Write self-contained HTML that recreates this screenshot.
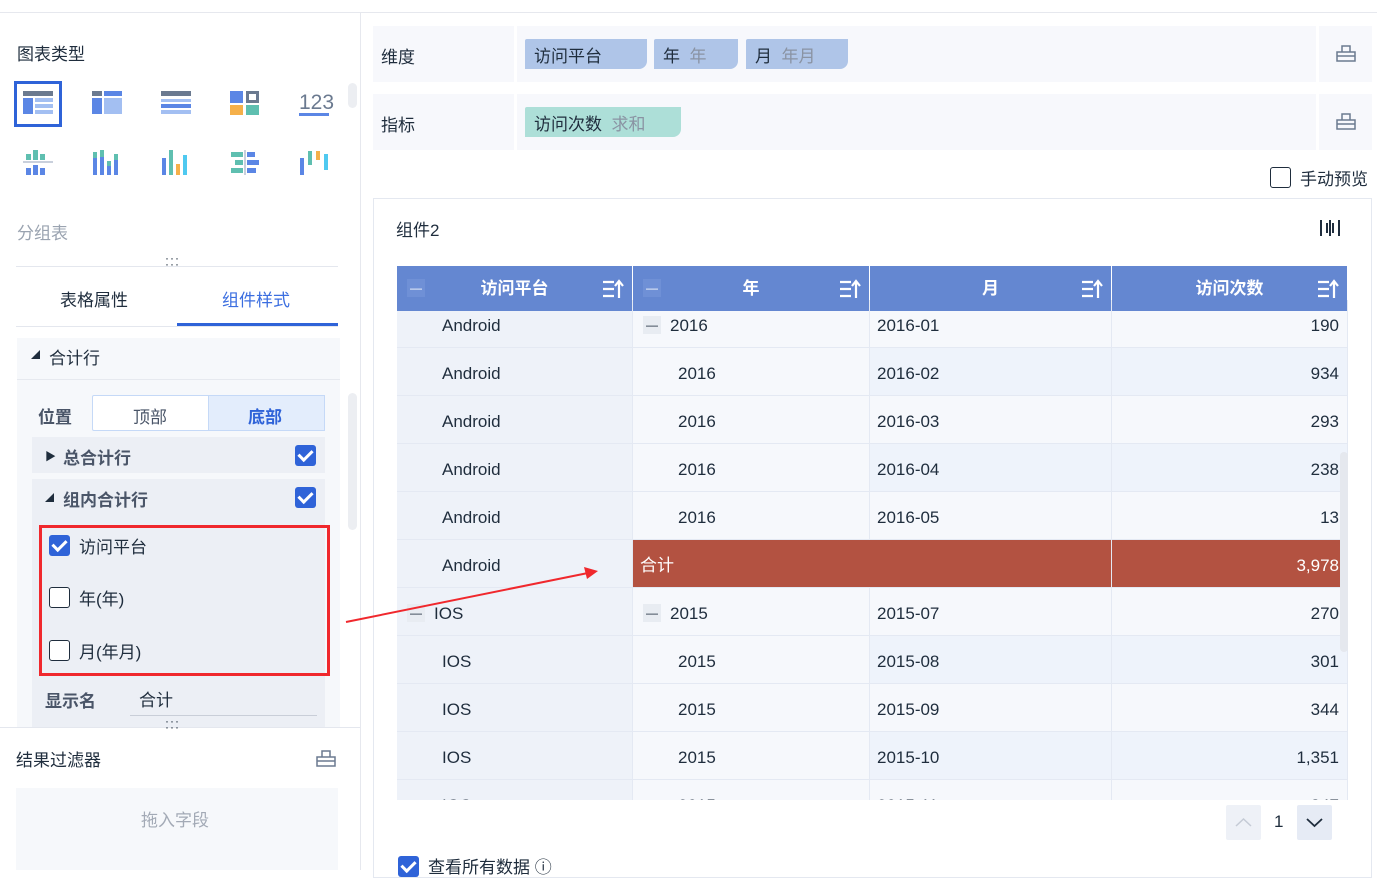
<!DOCTYPE html>
<html><head><meta charset="utf-8"><style>
*{box-sizing:border-box;margin:0;padding:0}
body{width:1377px;height:870px;overflow:hidden;background:#fff;font-family:"Liberation Sans","Noto Sans CJK SC",sans-serif;color:#1f2d3d;font-size:17px;position:relative}
.a{position:absolute}
.cb{position:absolute;width:21px;height:21px;border-radius:3px;background:#2f63d8}
.cb:after{content:"";position:absolute;left:6px;top:2px;width:6px;height:11px;border:solid #fff;border-width:0 3px 3px 0;transform:rotate(45deg)}
.cbe{position:absolute;width:21px;height:21px;border:1.5px solid #1f2d3d;border-radius:3px;background:#fff}
.th{position:absolute;top:0;height:45px;background:#6487d1;color:#fff;font-weight:bold;font-size:17px;line-height:45px;text-align:center;z-index:2}
.cell{position:absolute;height:48px;line-height:51px;font-size:17px;color:#1f2d3d;border-bottom:1px solid #e4e9f3;border-right:1px solid #e4e9f3;white-space:nowrap}
</style></head><body>
<div class="a" style="left:0;top:12px;width:1377px;height:1px;background:#e6e8ee"></div>
<div class="a" style="left:360px;top:12px;width:1px;height:858px;background:#e6e8ee"></div>

<div class="a" style="left:17px;top:40px;font-size:17px">图表类型</div>
<div class="a" style="left:14px;top:81px;width:48px;height:46px;border:3px solid #2f63d8"></div>
<svg class="a" style="left:0;top:80px" width="345" height="110">
<g>
<rect x="23" y="11" width="30" height="5" fill="#6b7a90"/><rect x="23" y="18" width="10" height="16" fill="#5b86e5"/><rect x="35" y="18" width="18" height="4" fill="#a3bff2"/><rect x="35" y="24" width="18" height="4" fill="#a3bff2"/><rect x="35" y="30" width="18" height="4" fill="#a3bff2"/>
<rect x="92" y="11" width="10" height="5" fill="#6b7a90"/><rect x="104" y="11" width="18" height="5" fill="#5b86e5"/><rect x="92" y="18" width="10" height="16" fill="#5b86e5"/><rect x="104" y="18" width="18" height="16" fill="#a3bff2"/>
<rect x="161" y="11" width="30" height="5" fill="#6b7a90"/><rect x="161" y="19" width="30" height="3" fill="#a3bff2"/><rect x="161" y="24" width="30" height="4" fill="#5b86e5"/><rect x="161" y="30" width="30" height="4" fill="#a3bff2"/>
<rect x="230" y="11" width="13" height="12" fill="#5b86e5"/><rect x="246" y="11" width="13" height="12" fill="#6b7a90"/><rect x="249" y="14" width="7" height="6" fill="#fff"/><rect x="230" y="25" width="13" height="10" fill="#f5b04a"/><rect x="246" y="25" width="13" height="10" fill="#5fbfb0"/>
<text x="299" y="29" font-size="21" fill="#6b7a90" font-family="Liberation Sans">123</text><rect x="299" y="33" width="30" height="3" fill="#5b86e5"/>
<rect x="23" y="81" width="30" height="2" fill="#c9d0dc"/><rect x="26" y="74" width="5" height="6" fill="#5fbfb0"/><rect x="33" y="70" width="5" height="10" fill="#5fbfb0"/><rect x="40" y="74" width="5" height="6" fill="#5fbfb0"/><rect x="26" y="88" width="5" height="7" fill="#5b86e5"/><rect x="33" y="85" width="5" height="10" fill="#5b86e5"/><rect x="40" y="88" width="5" height="7" fill="#5b86e5"/>
<rect x="93" y="75" width="4" height="20" fill="#5b86e5"/><rect x="93" y="72" width="4" height="6" fill="#5fbfb0"/><rect x="100" y="70" width="4" height="25" fill="#5b86e5"/><rect x="100" y="70" width="4" height="7" fill="#5fbfb0"/><rect x="107" y="81" width="4" height="14" fill="#5b86e5"/><rect x="107" y="81" width="4" height="5" fill="#5fbfb0"/><rect x="114" y="74" width="4" height="21" fill="#5b86e5"/><rect x="114" y="74" width="4" height="6" fill="#5fbfb0"/>
<rect x="162" y="78" width="4" height="17" fill="#5b86e5"/><rect x="169" y="70" width="4" height="25" fill="#5fbfb0"/><rect x="176" y="84" width="4" height="11" fill="#f5b04a"/><rect x="183" y="75" width="4" height="20" fill="#4fc9f0"/>
<rect x="231" y="72" width="12" height="5" fill="#5fbfb0"/><rect x="235" y="80" width="8" height="5" fill="#5fbfb0"/><rect x="231" y="88" width="12" height="5" fill="#5fbfb0"/><rect x="244" y="70" width="2" height="25" fill="#c9d0dc"/><rect x="247" y="72" width="8" height="5" fill="#5b86e5"/><rect x="247" y="80" width="12" height="5" fill="#5b86e5"/><rect x="247" y="88" width="9" height="5" fill="#5b86e5"/>
<rect x="300" y="78" width="4" height="17" fill="#5b86e5"/><rect x="308" y="71" width="4" height="14" fill="#5fbfb0"/><rect x="316" y="71" width="4" height="9" fill="#f5b04a"/><rect x="324" y="74" width="4" height="16" fill="#4fc9f0"/>
</g></svg>
<div class="a" style="left:348px;top:83px;width:9px;height:25px;border-radius:5px;background:#eceef2"></div>
<div class="a" style="left:17px;top:219px;color:#9aa3b0">分组表</div>
<div class="a" style="left:165px;top:255px;font-size:12px;letter-spacing:1px;line-height:6px">···<br>···</div>
<div class="a" style="left:16px;top:266px;width:322px;height:1px;background:#e4e7ee"></div>
<div class="a" style="left:60px;top:286px">表格属性</div>
<div class="a" style="left:222px;top:286px;color:#3b6ee0">组件样式</div>
<div class="a" style="left:16px;top:326px;width:322px;height:1px;background:#e4e7ee"></div>
<div class="a" style="left:177px;top:323px;width:161px;height:3px;background:#2f63d8"></div>
<div class="a" style="left:17px;top:338px;width:323px;height:389px;background:#f6f8fb"></div>
<div class="a" style="left:17px;top:379px;width:323px;height:1px;background:#e6e9ef"></div>
<div class="a" style="left:31px;top:348px;font-size:9px">◢</div>
<div class="a" style="left:49px;top:344px">合计行</div>
<div class="a" style="left:38px;top:403px;font-weight:bold;color:#4a5568">位置</div>
<div class="a" style="left:92px;top:395px;width:233px;height:36px;border:1px solid #c5d9f7;background:#fff;border-radius:2px"></div>
<div class="a" style="left:208px;top:395px;width:117px;height:36px;background:#e3edfc;border:1px solid #c5d9f7"></div>
<div class="a" style="left:133px;top:403px;color:#4a5568">顶部</div>
<div class="a" style="left:248px;top:403px;color:#2f63d8;font-weight:bold">底部</div>
<div class="a" style="left:32px;top:437px;width:293px;height:36px;background:#eceff5"></div>
<div class="a" style="left:45px;top:448px;font-size:11px">▶</div>
<div class="a" style="left:63px;top:444px;font-weight:bold;color:#4a5568">总合计行</div>
<div class="cb" style="left:295px;top:445px"></div>
<div class="a" style="left:32px;top:479px;width:293px;height:248px;background:#eceff5"></div>
<div class="a" style="left:45px;top:491px;font-size:9px">◢</div>
<div class="a" style="left:63px;top:486px;font-weight:bold;color:#4a5568">组内合计行</div>
<div class="cb" style="left:295px;top:487px"></div>
<div class="a" style="left:39px;top:525px;width:291px;height:151px;border:3px solid #f0282d"></div>
<div class="cb" style="left:49px;top:535px"></div>
<div class="a" style="left:79px;top:533px">访问平台</div>
<div class="cbe" style="left:49px;top:587px"></div>
<div class="a" style="left:79px;top:585px">年(年)</div>
<div class="cbe" style="left:49px;top:640px"></div>
<div class="a" style="left:79px;top:638px">月(年月)</div>
<div class="a" style="left:45px;top:687px;font-weight:bold;color:#4a5568">显示名</div>
<div class="a" style="left:139px;top:686px">合计</div>
<div class="a" style="left:130px;top:715px;width:187px;height:1px;background:#c9ced8"></div>
<div class="a" style="left:348px;top:393px;width:9px;height:137px;border-radius:5px;background:#eceef2"></div>
<div class="a" style="left:0;top:727px;width:360px;height:1px;background:#e4e7ee"></div>
<div class="a" style="left:165px;top:718px;font-size:12px;letter-spacing:1px;line-height:6px">···<br>···</div>
<div class="a" style="left:16px;top:746px">结果过滤器</div>
<svg class="a" style="left:316px;top:749px" width="20" height="18"><path d="M1 8h18v9H1z M6 8V2h8v6 M1 12h18" fill="none" stroke="#6b7a90" stroke-width="1.5"/></svg>
<div class="a" style="left:16px;top:788px;width:322px;height:82px;background:#f6f8fb"></div>
<div class="a" style="left:141px;top:806px;color:#a3aab6">拖入字段</div>

<div class="a" style="left:373px;top:26px;width:999px;height:56px;background:#f7f8fc"></div>
<div class="a" style="left:514px;top:26px;width:3px;height:56px;background:#fff"></div>
<div class="a" style="left:1316px;top:26px;width:3px;height:56px;background:#fff"></div>
<div class="a" style="left:381px;top:43px">维度</div>
<div class="a" style="left:525px;top:39px;width:122px;height:30px;background:#afc5e8;border-radius:2px 0 8px 0;padding:3px 9px">访问平台</div>
<div class="a" style="left:654px;top:39px;width:84px;height:30px;background:#afc5e8;border-radius:2px 0 8px 0;padding:3px 9px">年 <span style="color:#8a93a3">&nbsp;年</span></div>
<div class="a" style="left:746px;top:39px;width:102px;height:30px;background:#afc5e8;border-radius:2px 0 8px 0;padding:3px 9px">月 <span style="color:#8a93a3">&nbsp;年月</span></div>
<svg class="a" style="left:1336px;top:44px" width="20" height="18"><path d="M1 8h18v9H1z M6 8V2h8v6 M1 12h18" fill="none" stroke="#6b7a90" stroke-width="1.5"/></svg>
<div class="a" style="left:373px;top:94px;width:999px;height:56px;background:#f7f8fc"></div>
<div class="a" style="left:514px;top:94px;width:3px;height:56px;background:#fff"></div>
<div class="a" style="left:1316px;top:94px;width:3px;height:56px;background:#fff"></div>
<div class="a" style="left:381px;top:111px">指标</div>
<div class="a" style="left:525px;top:107px;width:156px;height:30px;background:#addfd8;border-radius:2px 0 8px 0;padding:3px 9px">访问次数 <span style="color:#8a93a3">&nbsp;求和</span></div>
<svg class="a" style="left:1336px;top:112px" width="20" height="18"><path d="M1 8h18v9H1z M6 8V2h8v6 M1 12h18" fill="none" stroke="#6b7a90" stroke-width="1.5"/></svg>
<div class="cbe" style="left:1270px;top:167px"></div>
<div class="a" style="left:1300px;top:165px">手动预览</div>

<div class="a" style="left:373px;top:198px;width:999px;height:680px;border:1px solid #e4e8f0"></div>
<div class="a" style="left:396px;top:216px">组件2</div>
<svg class="a" style="left:1319px;top:218px" width="22" height="20"><path d="M2 2v16M20 2v16M8 5v10M14 5v10M11 2v16" stroke="#1f2d3d" stroke-width="2"/></svg>

<div class="a" style="left:397px;top:266px;width:951px;height:534px;overflow:hidden">
<div id="t"></div>
</div>
<div class="a" style="left:1340px;top:452px;width:8px;height:200px;border-radius:4px;background:#e5e8ee"></div>
<div class="a" style="left:1226px;top:805px;width:35px;height:35px;background:#eef1f7;border-radius:2px"><svg width="35" height="35"><path d="M10 21l7.5-7 7.5 7" fill="none" stroke="#c5cbd6" stroke-width="1.5"/></svg></div>
<div class="a" style="left:1274px;top:812px">1</div>
<div class="a" style="left:1297px;top:805px;width:35px;height:35px;background:#e6ebf5;border-radius:2px"><svg width="35" height="35"><path d="M10 14l7.5 7 7.5-7" fill="none" stroke="#1f2d3d" stroke-width="1.8"/></svg></div>
<div class="cb" style="left:398px;top:856px"></div>
<div class="a" style="left:428px;top:853px">查看所有数据 ⓘ</div>

<svg class="a" style="left:0;top:0;pointer-events:none" width="1377" height="870"><line x1="346" y1="622" x2="588" y2="573" stroke="#f0282d" stroke-width="2"/><path d="M598 571 L584 567 L587 579 Z" fill="#f0282d"/></svg>

<script>
var rows=[["Android","2016","2016-01","190",1,1],["Android","2016","2016-02","934"],["Android","2016","2016-03","293"],["Android","2016","2016-04","238"],["Android","2016","2016-05","13"],["Android","合计","","3,978",0,0,1],["IOS","2015","2015-07","270",1,1],["IOS","2015","2015-08","301"],["IOS","2015","2015-09","344"],["IOS","2015","2015-10","1,351"],["IOS","2015","2015-11","347"]];
var X=[0,236,473,715,951],h='';
var heads=[["访问平台",1],["年",1],["月",0],["访问次数",0]];
var sort='<svg style="position:absolute;right:8px;top:13px" width="22" height="20"><path d="M1 3h11M1 10h11M1 17h11" stroke="#fff" stroke-width="2.2"/><path d="M17 19V3M13 7l4-5 4 5" fill="none" stroke="#fff" stroke-width="2.2"/></svg>';
heads.forEach(function(c,i){h+='<div class="th" style="left:'+X[i]+'px;width:'+(X[i+1]-X[i]-1)+'px">'+c[0]+(c[1]?'<span style="position:absolute;left:10px;top:13px;width:18px;height:18px;background:#6f90d6;color:#fff;line-height:18px;font-size:12px;font-weight:normal">—</span>':'')+sort+'</div>';});
rows.forEach(function(r,k){var y=34+k*48;
for(var i=0;i<4;i++){var bg=i==0?'#eef2f9':(k%2==1&&i>=2?'#eef3fb':'#f6f8fc');var col='#1f2d3d';var txt=r[i];
if(r[6]&&i>0){bg='#b35241';col='#fff';}
var pad=i==0?45:(i==1?(r[5]?37:45):(i==2?7:0));
if(i==0&&r[4]&&r[0]=='IOS')pad=37;
if(r[6]&&i==1)pad=7;
var al=i==3?'right':'left';
if(r[6]&&i==2)continue;
var w=X[i+1]-X[i];if(r[6]&&i==1)w=X[3]-X[1];
var pre='';
if((i==1&&r[5])||(i==0&&r[4]&&r[0]=='IOS'))pre='<span style="position:absolute;left:10px;top:16px;width:18px;height:18px;background:#e8ecf2;line-height:18px;text-align:center;font-size:12px">—</span>';
h+='<div class="cell" style="left:'+X[i]+'px;top:'+y+'px;width:'+w+'px;background:'+bg+';color:'+col+';padding:'+(i==3?'0 8px 0 0':'0 0 0 '+pad+'px')+';text-align:'+al+'">'+pre+txt+'</div>';}
});
document.getElementById('t').innerHTML=h;
</script>
</body></html>
